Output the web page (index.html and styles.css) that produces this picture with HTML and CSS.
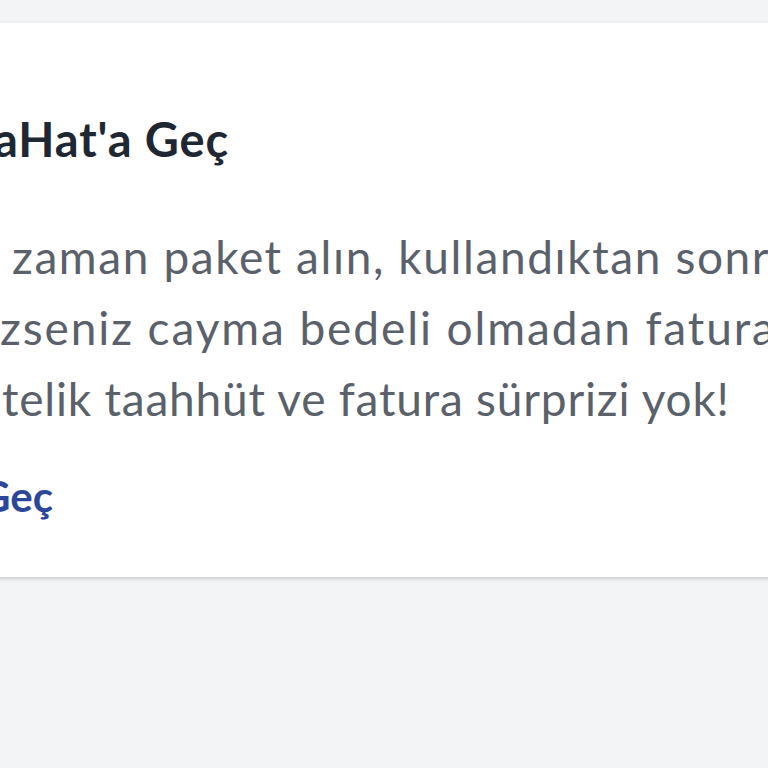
FILE: index.html
```html
<!DOCTYPE html>
<html lang="tr">
<head>
<meta charset="utf-8">
<title>Hat'a Geç</title>
<link rel="stylesheet" href="styles.css">
</head>
<body>
<main class="page">
  <section class="card">
    <h2 class="card-title">aHat'a Geç</h2>
    <p class="card-text">
      <span class="line line-first">zaman paket alın, kullandıktan sonra istemezseniz</span>
      <span class="line line-second">zseniz cayma bedeli olmadan faturasız</span>
      <span class="line line-third">telik taahhüt ve fatura sürprizi yok!</span>
    </p>
    <a class="card-link" href="#">Geç</a>
  </section>
</main>
</body>
</html>
```

FILE: styles.css
```css
html, body {
  margin: 0;
  padding: 0;
}
body {
  background: #f3f4f6;
  overflow: hidden;
  width: 768px;
  height: 768px;
  font-family: Lato, "Noto Sans", sans-serif;
}
.page {
  padding-top: 22px;
}
.card {
  background: #ffffff;
  margin-left: -20px;
  margin-right: -20px;
  height: 555px;
  box-sizing: border-box;
  padding: 88px 0 0 20px;
  border-top: 1px solid #eceef1;
  box-shadow: 0 2px 4px rgba(0, 0, 0, 0.16);
  overflow: hidden;
}
.card-title {
  margin: 0;
  font-size: 47px;
  line-height: 56px;
  font-weight: 700;
  color: #1f2733;
  letter-spacing: 0.9px;
  text-indent: -6px;
  white-space: nowrap;
}
.card-text {
  margin: 54px 0 0;
  font-size: 46px;
  line-height: 71px;
  color: #5a616b;
  letter-spacing: 0.8px;
  white-space: nowrap;
}
.line {
  display: block;
}
.line-first {
  padding-left: 12px;
  letter-spacing: 1.6px;
}
.line-second {
  letter-spacing: 1.9px;
}
.line-third {
  padding-left: 2px;
}
.card-link {
  display: block;
  margin-top: 37px;
  font-size: 42px;
  line-height: 50px;
  font-weight: 700;
  color: #2c4799;
  text-decoration: none;
  text-indent: -20px;
}
```
